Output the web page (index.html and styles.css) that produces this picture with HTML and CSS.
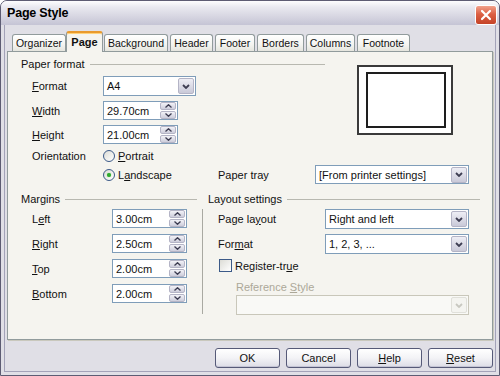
FILE: index.html
```html
<!DOCTYPE html>
<html lang="en">
<head>
  <meta charset="UTF-8">
  <title>Page Style</title>
  <link rel="stylesheet" href="styles.css">
</head>
<body>

<div class="window">
  <div class="titlebar">
    <span class="title">Page Style</span>
    <span class="close">
      <svg width="12" height="12" viewBox="0 0 12 12"><path d="M2 2 L10 10 M10 2 L2 10" stroke="#fff" stroke-width="2.2" stroke-linecap="round"/></svg>
    </span>
  </div>

  <div class="client">
    <div class="tabs">
      <span class="tab">Organizer</span>
      <span class="tab active">Page</span>
      <span class="tab">Background</span>
      <span class="tab">Header</span>
      <span class="tab">Footer</span>
      <span class="tab">Borders</span>
      <span class="tab">Columns</span>
      <span class="tab">Footnote</span>
    </div>

    <div class="panel">
      <!-- Paper format -->
      <div class="paper">
        <div class="paper-fields">
          <div class="group-head"><span>Paper format</span></div>
          <div class="row row-combo">
            <span class="lbl"><u>F</u>ormat</span>
            <div class="combo combo-format"><span class="val">A4</span><span class="drop"><svg width="8" height="5" viewBox="0 0 8 5"><path d="M1 1 L4 4 L7 1" fill="none" stroke="#3d3d52" stroke-width="1.8"/></svg></span></div>
          </div>
          <div class="row">
            <span class="lbl"><u>W</u>idth</span>
            <div class="spin"><span class="val">29.70cm</span><span class="spin-btns"><i><svg width="7" height="4" viewBox="0 0 7 4"><path d="M0.5 3.5 L3.5 0.7 L6.5 3.5" fill="none" stroke="#3d3d52" stroke-width="1.3"/></svg></i><i><svg width="7" height="4" viewBox="0 0 7 4"><path d="M0.5 0.5 L3.5 3.3 L6.5 0.5" fill="none" stroke="#3d3d52" stroke-width="1.3"/></svg></i></span></div>
          </div>
          <div class="row">
            <span class="lbl"><u>H</u>eight</span>
            <div class="spin"><span class="val">21.00cm</span><span class="spin-btns"><i><svg width="7" height="4" viewBox="0 0 7 4"><path d="M0.5 3.5 L3.5 0.7 L6.5 3.5" fill="none" stroke="#3d3d52" stroke-width="1.3"/></svg></i><i><svg width="7" height="4" viewBox="0 0 7 4"><path d="M0.5 0.5 L3.5 3.3 L6.5 0.5" fill="none" stroke="#3d3d52" stroke-width="1.3"/></svg></i></span></div>
          </div>
        </div>
        <div class="preview"><div class="sheet"></div></div>
      </div>

      <div class="row orient">
        <span class="lbl">Orientation</span>
        <span class="radio"></span><span class="opt"><u>P</u>ortrait</span>
      </div>
      <div class="row landscape">
        <span class="lbl"></span>
        <span class="radio-group"><span class="radio checked"></span><span class="opt">L<u>a</u>ndscape</span></span>
        <span class="tray-lbl">Paper tray</span>
        <div class="combo combo-tray"><span class="val">[From printer settings]</span><span class="drop"><svg width="8" height="5" viewBox="0 0 8 5"><path d="M1 1 L4 4 L7 1" fill="none" stroke="#3d3d52" stroke-width="1.8"/></svg></span></div>
      </div>

      <!-- Margins / Layout settings -->
      <div class="lower">
        <div class="margins">
          <div class="group-head"><span>Margins</span></div>
          <div class="row mrow">
            <span class="lbl lbl-m">L<u>e</u>ft</span>
            <div class="spin"><span class="val">3.00cm</span><span class="spin-btns"><i><svg width="7" height="4" viewBox="0 0 7 4"><path d="M0.5 3.5 L3.5 0.7 L6.5 3.5" fill="none" stroke="#3d3d52" stroke-width="1.3"/></svg></i><i><svg width="7" height="4" viewBox="0 0 7 4"><path d="M0.5 0.5 L3.5 3.3 L6.5 0.5" fill="none" stroke="#3d3d52" stroke-width="1.3"/></svg></i></span></div>
          </div>
          <div class="row mrow">
            <span class="lbl lbl-m"><u>R</u>ight</span>
            <div class="spin"><span class="val">2.50cm</span><span class="spin-btns"><i><svg width="7" height="4" viewBox="0 0 7 4"><path d="M0.5 3.5 L3.5 0.7 L6.5 3.5" fill="none" stroke="#3d3d52" stroke-width="1.3"/></svg></i><i><svg width="7" height="4" viewBox="0 0 7 4"><path d="M0.5 0.5 L3.5 3.3 L6.5 0.5" fill="none" stroke="#3d3d52" stroke-width="1.3"/></svg></i></span></div>
          </div>
          <div class="row mrow">
            <span class="lbl lbl-m"><u>T</u>op</span>
            <div class="spin"><span class="val">2.00cm</span><span class="spin-btns"><i><svg width="7" height="4" viewBox="0 0 7 4"><path d="M0.5 3.5 L3.5 0.7 L6.5 3.5" fill="none" stroke="#3d3d52" stroke-width="1.3"/></svg></i><i><svg width="7" height="4" viewBox="0 0 7 4"><path d="M0.5 0.5 L3.5 3.3 L6.5 0.5" fill="none" stroke="#3d3d52" stroke-width="1.3"/></svg></i></span></div>
          </div>
          <div class="row mrow">
            <span class="lbl lbl-m"><u>B</u>ottom</span>
            <div class="spin"><span class="val">2.00cm</span><span class="spin-btns"><i><svg width="7" height="4" viewBox="0 0 7 4"><path d="M0.5 3.5 L3.5 0.7 L6.5 3.5" fill="none" stroke="#3d3d52" stroke-width="1.3"/></svg></i><i><svg width="7" height="4" viewBox="0 0 7 4"><path d="M0.5 0.5 L3.5 3.3 L6.5 0.5" fill="none" stroke="#3d3d52" stroke-width="1.3"/></svg></i></span></div>
          </div>
        </div>

        <div class="vsep"></div>

        <div class="layout">
          <div class="group-head"><span>Layout settings</span></div>
          <div class="row lrow">
            <span class="lbl lbl-r">Page la<u>y</u>out</span>
            <div class="combo combo-layout"><span class="val">Right and left</span><span class="drop"><svg width="8" height="5" viewBox="0 0 8 5"><path d="M1 1 L4 4 L7 1" fill="none" stroke="#3d3d52" stroke-width="1.8"/></svg></span></div>
          </div>
          <div class="row lrow">
            <span class="lbl lbl-r">For<u>m</u>at</span>
            <div class="combo combo-layout"><span class="val">1, 2, 3, ...</span><span class="drop"><svg width="8" height="5" viewBox="0 0 8 5"><path d="M1 1 L4 4 L7 1" fill="none" stroke="#3d3d52" stroke-width="1.8"/></svg></span></div>
          </div>
          <div class="row check-row">
            <span class="check"></span><span class="opt">Register-tr<u>u</u>e</span>
          </div>
          <div class="ref-lbl">Reference <u>S</u>tyle</div>
          <div class="combo combo-ref disabled"><span class="val"></span><span class="drop"><svg width="8" height="5" viewBox="0 0 8 5"><path d="M1 1 L4 4 L7 1" fill="none" stroke="#c8c8c0" stroke-width="1.8"/></svg></span></div>
        </div>
      </div>
    </div>

    <div class="buttons">
      <button>OK</button>
      <button>Cancel</button>
      <button><u>H</u>elp</button>
      <button><u>R</u>eset</button>
    </div>
  </div>
</div>

</body>
</html>
```

FILE: styles.css
```css
body {
  margin: 0;
  font-family: "Liberation Sans", Arial, sans-serif;
  font-size: 11px;
  color: #111;
  background: #fff;
}
u {
  text-underline-offset: 1px;
}

.window {
  width: 500px;
  height: 376px;
  box-sizing: border-box;
  border: 1px solid #5d5c73;
  border-radius: 7px 7px 0 0;
  background: #e0dfe6;
  display: flex;
  flex-direction: column;
  overflow: hidden;
}
.titlebar {
  height: 24px;
  flex: none;
  display: flex;
  align-items: center;
  justify-content: space-between;
  padding: 0 2px 0 6px;
  background: linear-gradient(#fdfdfe 0%, #e9e9f0 25%, #d9d8e3 60%, #c5c4d5 100%);
}
.title {
  font-weight: bold;
  font-size: 12.5px;
  letter-spacing: -0.2px;
  color: #000;
}
.close {
  width: 22px;
  height: 20px;
  margin-top: 3px;
  box-sizing: border-box;
  border: 1px solid #fff;
  border-radius: 3px;
  background: linear-gradient(#f1a28c, #dc6044 45%, #c54327);
  display: flex;
  align-items: center;
  justify-content: center;
}

.client {
  flex: 1;
  margin: 0 3px 3px;
  border: 1px solid #a3a2b8;
  border-top: none;
  padding: 6px 2px 0 2px;
  display: flex;
  flex-direction: column;
}

/* tabs */
.tabs {
  height: 20px;
  display: flex;
  align-items: flex-end;
  padding-left: 5px;
  font-size: 10.5px;
}
.tab {
  height: 17px;
  box-sizing: border-box;
  border: 1px solid #919b9c;
  border-bottom: none;
  border-radius: 3px 3px 0 0;
  background: linear-gradient(#ffffff, #f4f4f0 60%, #e5e5de);
  display: flex;
  align-items: center;
  justify-content: center;
  margin-right: 2px;
}
.tab:nth-child(1) { width: 54px; margin-right: 0; }
.tab:nth-child(2) { width: 37px; margin-right: 0; }
.tab:nth-child(3) { width: 64px; margin-left: 1px; }
.tab:nth-child(4) { width: 43px; }
.tab:nth-child(5) { width: 40px; }
.tab:nth-child(6) { width: 47px; }
.tab:nth-child(7) { width: 49px; }
.tab:nth-child(8) { width: 53px; }
.tab.active {
  height: 21px;
  margin-bottom: -1px;
  position: relative;
  background: #f5f4ef;
  border-top: 2px solid #e99a2e;
  box-shadow: inset 0 1px 0 #ffd27a;
  font-weight: bold;
  font-size: 11px;
  padding-bottom: 2px;
}

.panel {
  height: 289px;
  box-sizing: border-box;
  border: 1px solid #919b9c;
  background: #f5f4ef;
  padding: 5px 0 0 13px;
  box-shadow: 1px 1px 0 #c9c8bd;
}

.group-head {
  height: 14px;
  display: flex;
  align-items: center;
  gap: 5px;
}
.group-head::after {
  content: "";
  flex: 1;
  border-top: 1px solid #b8b8b0;
}

.row {
  display: flex;
  align-items: center;
  margin-top: 5px;
  height: 19px;
}
.row-combo {
  height: 20px;
}
.lbl {
  width: 71px;
  padding-left: 11px;
  flex: none;
}
.lbl-m { width: 80px; }
.lbl-r { width: 107px; padding-left: 10px; }

.combo, .spin {
  box-sizing: border-box;
  height: 100%;
  border: 1px solid #7f9db9;
  background: #fff;
  display: flex;
  align-items: center;
  padding-left: 3px;
  flex: none;
}
.val {
  flex: 1;
  white-space: nowrap;
}
.drop {
  width: 16px;
  height: 16px;
  box-sizing: border-box;
  margin-right: 1px;
  border: 1px solid #b4b4c6;
  border-radius: 2px;
  background: linear-gradient(#eeeef5, #c9c9d8);
  display: flex;
  align-items: center;
  justify-content: center;
}
.spin { width: 75px; }
.spin-btns {
  width: 16px;
  margin-right: 1px;
  display: flex;
  flex-direction: column;
  gap: 1px;
}
.spin-btns i {
  height: 8px;
  box-sizing: border-box;
  border: 1px solid #b4b4c6;
  border-radius: 2px;
  background: linear-gradient(#f2f2f7, #cdcddb);
  display: flex;
  align-items: center;
  justify-content: center;
}
.combo-format { width: 93px; }
.combo-tray { width: 154px; }
.combo-layout { width: 144px; height: 20px; }

.paper {
  display: flex;
}
.paper-fields {
  width: 304px;
}
.preview {
  width: 96px;
  height: 70px;
  margin: 8px 0 0 32px;
  box-sizing: border-box;
  border: 2px solid #3a3a3a;
  background: #fff;
  padding: 5px 5px 5px 7px;
}
.sheet {
  height: 100%;
  box-sizing: border-box;
  border: 2px solid #1e1e1e;
}

.radio {
  width: 12px;
  height: 12px;
  box-sizing: border-box;
  border-radius: 50%;
  border: 1px solid #3c5a88;
  background: linear-gradient(135deg, #dcdcd6, #ffffff);
  flex: none;
  display: flex;
  align-items: center;
  justify-content: center;
}
.radio.checked::after {
  content: "";
  width: 4px;
  height: 4px;
  border-radius: 50%;
  background: #2fa82f;
  box-shadow: 0 0 1px #5cd15c;
}
.opt {
  margin-left: 3px;
}
.orient {
  margin-top: 4px;
  height: 16px;
}
.landscape {
  margin-top: 1px;
}
.radio-group {
  width: 115px;
  display: flex;
  align-items: center;
}
.tray-lbl {
  width: 97px;
}

.lower {
  display: flex;
  margin-top: 8px;
}
.margins {
  width: 176px;
}
.mrow {
  margin-top: 6px;
}
.group-head + .mrow {
  margin-top: 3px;
}
.vsep {
  width: 1px;
  height: 105px;
  margin: 17px 0 0 5px;
  background: #a9a9a2;
}
.layout {
  width: 272px;
  margin-left: 5px;
}
.lrow {
  height: 20px;
}
.group-head + .lrow {
  margin-top: 3px;
}
.check-row {
  height: 17px;
  margin-top: 3px;
  padding-left: 11px;
}
.check {
  width: 13px;
  height: 13px;
  box-sizing: border-box;
  border: 1px solid #3c5a88;
  background: linear-gradient(135deg, #dcdcd6, #ffffff);
}
.ref-lbl {
  height: 12px;
  line-height: 12px;
  margin-top: 7px;
  padding-left: 28px;
  color: #aca899;
}
.combo-ref {
  width: 233px;
  height: 20px;
  margin: 2px 0 0 28px;
}
.combo.disabled {
  border-color: #c9c7ba;
  background: #f9f9f6;
}
.combo.disabled .drop {
  border-color: #e0e0da;
  background: #f4f4f0;
}

.buttons {
  display: flex;
  justify-content: flex-end;
  gap: 6px;
  margin-top: 8px;
}
button {
  width: 65px;
  height: 20px;
  box-sizing: border-box;
  border: 1px solid #565a78;
  border-radius: 3px;
  background: linear-gradient(#ffffff, #f3f3f6 50%, #dcdce6);
  box-shadow: inset 0 -1px 0 #c4c4d4;
  font-family: "Liberation Sans", Arial, sans-serif;
  font-size: 11px;
  color: #111;
  padding: 0;
}
```
